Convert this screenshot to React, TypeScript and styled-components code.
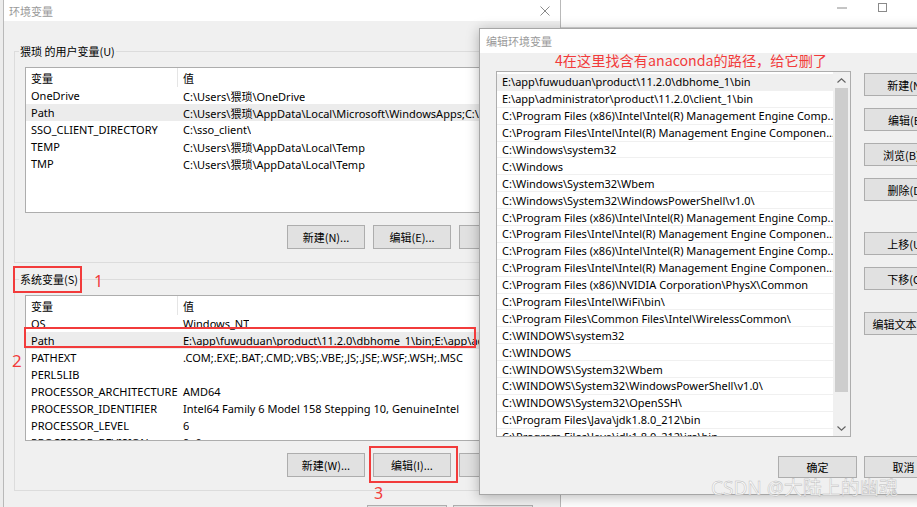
import React from 'react';
import styled, { createGlobalStyle } from 'styled-components';

const UI_FONT = `'Noto Sans CJK SC', 'Noto Sans', sans-serif`;
const LIST_FONT = `'Noto Sans', 'Noto Sans CJK SC', sans-serif`;

const GlobalStyle = createGlobalStyle`
  html, body {
    margin: 0;
    padding: 0;
  }
  body {
    width: 917px;
    height: 507px;
    overflow: hidden;
    background: #ffffff;
    font-family: ${UI_FONT};
    color: #000;
  }
`;

const Desktop = styled.div`
  position: relative;
  width: 917px;
  height: 507px;
  overflow: hidden;
  background: #ffffff;
`;

/* ---------- window behind everything ---------- */

const LeftSliver = styled.div`
  position: absolute;
  left: 0;
  top: 0;
  width: 3px;
  height: 507px;
  background: #ececec;
`;

const BackWindow = styled.div`
  position: absolute;
  left: 420px;
  top: 0;
  width: 522px;
  height: 507px;
  background: #ffffff;
`;

const BackTitleBar = styled.div`
  height: 27px;
  display: flex;
  justify-content: flex-end;
  align-items: flex-start;
  border-bottom: 1px solid #d4d4d4;
  box-shadow: 0 1px 2px rgba(0, 0, 0, 0.08);
`;

const CaptionButton = styled.div`
  width: 40px;
  height: 15px;
  display: flex;
  align-items: center;
  justify-content: center;
`;

/* ---------- dialog 1 : 环境变量 ---------- */

const EnvDialog = styled.div`
  position: absolute;
  left: 3px;
  top: 0;
  width: 558px;
  height: 540px;
  box-sizing: border-box;
  background: #f0f0f0;
  border-left: 1px solid #b9b9b9;
  border-right: 1px solid #b9b9b9;
  display: flex;
  flex-direction: column;
`;

const TitleBar = styled.div<{ $height: number; $pad: number }>`
  height: ${p => p.$height}px;
  flex: none;
  background: #ffffff;
  display: flex;
  align-items: center;
  justify-content: space-between;
  padding-left: ${p => p.$pad}px;
  font-size: 11px;
  color: #9a9a9a;
`;

const CloseBox = styled.div`
  width: 30px;
  height: 100%;
  display: flex;
  align-items: center;
  justify-content: center;
`;

const EnvBody = styled.div`
  padding: 22px 10px 0 10px;
  display: flex;
  flex-direction: column;
  gap: 8px;
`;

const GroupBox = styled.fieldset`
  margin: 0;
  min-width: 0;
  padding: 8px 10px 13px 10px;
  border: 1px solid #dcdcdc;
  display: flex;
  flex-direction: column;
`;

const GroupLabel = styled.legend`
  padding: 0 1px;
  margin-left: -6px;
  font-size: 11px;
  line-height: 16px;
`;

const VarList = styled.div`
  height: 146px;
  box-sizing: border-box;
  border: 1px solid #adadad;
  background: #ffffff;
  overflow: hidden;
`;

const VarHeader = styled.div`
  height: 19px;
  display: flex;
  align-items: center;
  font-size: 11px;
`;

const VarRow = styled.div<{ $selected?: boolean }>`
  height: 17px;
  display: flex;
  align-items: center;
  font-family: ${LIST_FONT};
  font-size: 11px;
  background: ${p => (p.$selected ? '#ececec' : 'transparent')};
`;

const NameCell = styled.div<{ $head?: boolean }>`
  width: 152px;
  flex: none;
  box-sizing: border-box;
  padding-left: 5px;
  height: 100%;
  display: flex;
  align-items: center;
  white-space: nowrap;
  border-right: 1px solid ${p => (p.$head ? '#e5e5e5' : 'transparent')};
`;

const ValueCell = styled.div`
  padding-left: 5px;
  white-space: nowrap;
  overflow: hidden;
`;

const ButtonRow = styled.div`
  margin-top: 12px;
  display: flex;
  justify-content: flex-end;
  gap: 8px;
  padding-right: 2px;
`;

const WinButton = styled.div<{ $w: number; $h: number }>`
  width: ${p => p.$w}px;
  height: ${p => p.$h}px;
  flex: none;
  box-sizing: border-box;
  background: #e1e1e1;
  border: 1px solid #adadad;
  display: flex;
  align-items: center;
  justify-content: center;
  font-size: 11px;
  white-space: nowrap;
  overflow: hidden;
`;

const EnvFooter = styled.div`
  margin-top: 14px;
  display: flex;
  justify-content: flex-end;
  gap: 6px;
  padding-right: 27px;
`;

/* ---------- dialog 2 : 编辑环境变量 ---------- */

const EditDialog = styled.div`
  position: absolute;
  left: 479px;
  top: 28px;
  width: 471px;
  height: 467px;
  box-sizing: border-box;
  background: #f0f0f0;
  border: 1px solid #a6a6a6;
  box-shadow: 0 2px 12px rgba(0, 0, 0, 0.28);
  display: flex;
  flex-direction: column;
`;

const EditBody = styled.div`
  padding: 18px 0 0 16px;
  display: flex;
  gap: 13px;
`;

const PathList = styled.div`
  width: 355px;
  height: 366px;
  flex: none;
  box-sizing: border-box;
  border: 1px solid #adadad;
  background: #ffffff;
  display: flex;
  overflow: hidden;
`;

const PathRows = styled.div`
  flex: 1;
  padding-top: 2px;
  overflow: hidden;
`;

const PathRow = styled.div<{ $selected?: boolean }>`
  height: 16.9px;
  box-sizing: border-box;
  border-bottom: 1px solid #f0f0f0;
  padding-left: 5px;
  display: flex;
  align-items: center;
  font-family: ${LIST_FONT};
  font-size: 11px;
  white-space: nowrap;
  overflow: hidden;
  background: ${p => (p.$selected ? '#efefef' : '#ffffff')};
`;

const ScrollTrack = styled.div`
  width: 17px;
  flex: none;
  background: #f0f0f0;
  display: flex;
  flex-direction: column;
  align-items: center;
`;

const ScrollArrow = styled.div`
  height: 16px;
  width: 17px;
  display: flex;
  align-items: center;
  justify-content: center;
`;

const ScrollThumb = styled.div`
  width: 13px;
  height: 304px;
  background: #cdcdcd;
`;

const ScrollSpacer = styled.div`
  flex: 1;
`;

const SideButtons = styled.div`
  width: 84px;
  padding-top: 2px;
  display: flex;
  flex-direction: column;
  gap: 12px;
`;

const SideGap = styled.div<{ $h: number }>`
  height: ${p => p.$h}px;
  margin-top: -12px;
`;

const EditFooter = styled.div`
  margin-top: 19px;
  display: flex;
  justify-content: flex-end;
  gap: 7px;
  padding-right: 6px;
`;

/* ---------- annotations over the screenshot ---------- */

const RedBox = styled.div<{ $x: number; $y: number; $w: number; $h: number }>`
  position: absolute;
  left: ${p => p.$x}px;
  top: ${p => p.$y}px;
  width: ${p => p.$w}px;
  height: ${p => p.$h}px;
  box-sizing: border-box;
  border: 2px solid #f23b3b;
`;

const RedNote = styled.div<{ $x: number; $y: number; $size: number }>`
  position: absolute;
  left: ${p => p.$x}px;
  top: ${p => p.$y}px;
  font-family: ${UI_FONT};
  font-size: ${p => p.$size}px;
  line-height: ${p => p.$size}px;
  color: #f23b3b;
  white-space: nowrap;
`;

const RedDigit = styled(RedNote)`
  font-family: ${LIST_FONT};
`;

const Watermark = styled.div`
  position: absolute;
  left: 711px;
  top: 477px;
  font-family: ${LIST_FONT};
  font-size: 19px;
  line-height: 22px;
  color: rgba(252, 252, 252, 0.9);
  -webkit-text-stroke: 0.45px #bababa;
  white-space: nowrap;
`;

/* ---------- data ---------- */

const userVars = [
  { name: 'OneDrive', value: 'C:\\Users\\猥琐\\OneDrive' },
  {
    name: 'Path',
    value: 'C:\\Users\\猥琐\\AppData\\Local\\Microsoft\\WindowsApps;C:\\Users\\猥琐\\AppData\\Local',
    selected: true,
  },
  { name: 'SSO_CLIENT_DIRECTORY', value: 'C:\\sso_client\\' },
  { name: 'TEMP', value: 'C:\\Users\\猥琐\\AppData\\Local\\Temp' },
  { name: 'TMP', value: 'C:\\Users\\猥琐\\AppData\\Local\\Temp' },
];

const systemVars = [
  { name: 'OS', value: 'Windows_NT' },
  {
    name: 'Path',
    value: 'E:\\app\\fuwuduan\\product\\11.2.0\\dbhome_1\\bin;E:\\app\\administrator\\product',
    selected: true,
  },
  { name: 'PATHEXT', value: '.COM;.EXE;.BAT;.CMD;.VBS;.VBE;.JS;.JSE;.WSF;.WSH;.MSC' },
  { name: 'PERL5LIB', value: '' },
  { name: 'PROCESSOR_ARCHITECTURE', value: 'AMD64' },
  { name: 'PROCESSOR_IDENTIFIER', value: 'Intel64 Family 6 Model 158 Stepping 10, GenuineIntel' },
  { name: 'PROCESSOR_LEVEL', value: '6' },
  { name: 'PROCESSOR_REVISION', value: '9e0a' },
];

const paths = [
  'E:\\app\\fuwuduan\\product\\11.2.0\\dbhome_1\\bin',
  'E:\\app\\administrator\\product\\11.2.0\\client_1\\bin',
  'C:\\Program Files (x86)\\Intel\\Intel(R) Management Engine Comp...',
  'C:\\Program Files\\Intel\\Intel(R) Management Engine Componen...',
  'C:\\Windows\\system32',
  'C:\\Windows',
  'C:\\Windows\\System32\\Wbem',
  'C:\\Windows\\System32\\WindowsPowerShell\\v1.0\\',
  'C:\\Program Files (x86)\\Intel\\Intel(R) Management Engine Comp...',
  'C:\\Program Files\\Intel\\Intel(R) Management Engine Componen...',
  'C:\\Program Files (x86)\\Intel\\Intel(R) Management Engine Comp...',
  'C:\\Program Files\\Intel\\Intel(R) Management Engine Componen...',
  'C:\\Program Files (x86)\\NVIDIA Corporation\\PhysX\\Common',
  'C:\\Program Files\\Intel\\WiFi\\bin\\',
  'C:\\Program Files\\Common Files\\Intel\\WirelessCommon\\',
  'C:\\WINDOWS\\system32',
  'C:\\WINDOWS',
  'C:\\WINDOWS\\System32\\Wbem',
  'C:\\WINDOWS\\System32\\WindowsPowerShell\\v1.0\\',
  'C:\\WINDOWS\\System32\\OpenSSH\\',
  'C:\\Program Files\\Java\\jdk1.8.0_212\\bin',
  'C:\\Program Files\\Java\\jdk1.8.0_212\\jre\\bin',
];

/* ---------- small drawings ---------- */

const CloseIcon = () => (
  <svg width="10" height="10" viewBox="0 0 10 10">
    <path d="M0.5 0.5 L9.5 9.5 M9.5 0.5 L0.5 9.5" stroke="#8a8a8a" strokeWidth="1" fill="none" />
  </svg>
);

const MinIcon = () => (
  <svg width="10" height="2" viewBox="0 0 10 2">
    <path d="M0 1 H10" stroke="#8a8a8a" strokeWidth="1" />
  </svg>
);

const MaxIcon = () => (
  <svg width="9" height="9" viewBox="0 0 9 9">
    <rect x="0.5" y="0.5" width="8" height="8" stroke="#8a8a8a" strokeWidth="1" fill="none" />
  </svg>
);

const Chevron = ({ up }: { up?: boolean }) => (
  <svg width="9" height="5" viewBox="0 0 9 5">
    <path
      d={up ? 'M0.5 4.5 L4.5 0.8 L8.5 4.5' : 'M0.5 0.5 L4.5 4.2 L8.5 0.5'}
      stroke="#606060"
      strokeWidth="1.1"
      fill="none"
    />
  </svg>
);

type Var = { name: string; value: string; selected?: boolean };

const VarTable = ({ rows }: { rows: Var[] }) => (
  <VarList>
    <VarHeader>
      <NameCell $head>变量</NameCell>
      <ValueCell>值</ValueCell>
    </VarHeader>
    {rows.map(r => (
      <VarRow key={r.name} $selected={r.selected}>
        <NameCell>{r.name}</NameCell>
        <ValueCell>{r.value}</ValueCell>
      </VarRow>
    ))}
  </VarList>
);

export default function App() {
  return (
    <Desktop>
      <GlobalStyle />
      <LeftSliver />

      <BackWindow>
        <BackTitleBar>
          <CaptionButton>
            <MinIcon />
          </CaptionButton>
          <CaptionButton>
            <MaxIcon />
          </CaptionButton>
          <CaptionButton>
            <CloseIcon />
          </CaptionButton>
        </BackTitleBar>
      </BackWindow>

      <EnvDialog>
        <TitleBar $height={21} $pad={5}>
          <span>环境变量</span>
          <CloseBox>
            <CloseIcon />
          </CloseBox>
        </TitleBar>
        <EnvBody>
          <GroupBox>
            <GroupLabel>猥琐 的用户变量(U)</GroupLabel>
            <VarTable rows={userVars} />
            <ButtonRow>
              <WinButton $w={78} $h={24}>新建(N)...</WinButton>
              <WinButton $w={78} $h={24}>编辑(E)...</WinButton>
              <WinButton $w={78} $h={24}>删除(D)</WinButton>
            </ButtonRow>
          </GroupBox>
          <GroupBox>
            <GroupLabel>系统变量(S)</GroupLabel>
            <VarTable rows={systemVars} />
            <ButtonRow>
              <WinButton $w={78} $h={24}>新建(W)...</WinButton>
              <WinButton $w={78} $h={24}>编辑(I)...</WinButton>
              <WinButton $w={78} $h={24}>删除(L)</WinButton>
            </ButtonRow>
          </GroupBox>
        </EnvBody>
        <EnvFooter>
          <WinButton $w={80} $h={24}>确定</WinButton>
          <WinButton $w={80} $h={24}>取消</WinButton>
        </EnvFooter>
      </EnvDialog>

      <EditDialog>
        <TitleBar $height={24} $pad={6}>
          <span>编辑环境变量</span>
        </TitleBar>
        <EditBody>
          <PathList>
            <PathRows>
              {paths.map((p, i) => (
                <PathRow key={i} $selected={i === 0}>
                  {p}
                </PathRow>
              ))}
            </PathRows>
            <ScrollTrack>
              <ScrollArrow>
                <Chevron up />
              </ScrollArrow>
              <ScrollThumb />
              <ScrollSpacer />
              <ScrollArrow>
                <Chevron />
              </ScrollArrow>
            </ScrollTrack>
          </PathList>
          <SideButtons>
            <WinButton $w={84} $h={23}>新建(N)</WinButton>
            <WinButton $w={84} $h={23}>编辑(E)</WinButton>
            <WinButton $w={84} $h={23}>浏览(B)...</WinButton>
            <WinButton $w={84} $h={23}>删除(D)</WinButton>
            <SideGap $h={19} />
            <WinButton $w={84} $h={23}>上移(U)</WinButton>
            <WinButton $w={84} $h={23}>下移(O)</WinButton>
            <SideGap $h={10} />
            <WinButton $w={84} $h={23}>编辑文本(T)...</WinButton>
          </SideButtons>
        </EditBody>
        <EditFooter>
          <WinButton $w={79} $h={22}>确定</WinButton>
          <WinButton $w={79} $h={22}>取消</WinButton>
        </EditFooter>
      </EditDialog>

      <RedBox $x={13} $y={266} $w={69} $h={27} />
      <RedDigit $x={94} $y={273} $size={16}>1</RedDigit>
      <RedBox $x={24} $y={327} $w={452} $h={21} />
      <RedDigit $x={12} $y={352} $size={17}>2</RedDigit>
      <RedBox $x={369} $y={446} $w={89} $h={37} />
      <RedDigit $x={374} $y={485} $size={16}>3</RedDigit>
      <RedNote $x={555} $y={53} $size={14.2}>4在这里找含有anaconda的路径，给它删了</RedNote>

      <Watermark>CSDN @大陆上的幽魂</Watermark>
    </Desktop>
  );
}
